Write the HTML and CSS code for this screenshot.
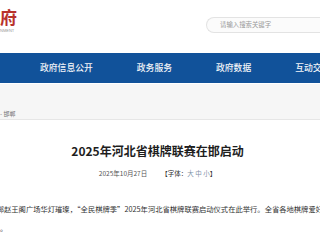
FILE: index.html
```html
<!DOCTYPE html>
<html lang="zh-CN">
<head>
<meta charset="utf-8">
<title>2025年河北省棋牌联赛在邯启动</title>
<link rel="stylesheet" href="styles.css">
</head>
<body>
<div class="page">
  <header class="top">
    <div class="logo">
      <span class="logo-cn">府</span>
      <span class="logo-en">NMENT</span>
    </div>
    <div class="search"><span class="search-ph">请输入搜索关键字</span></div>
  </header>
  <nav class="nav">
    <span class="nav-item">政府信息公开</span>
    <span class="nav-item">政务服务</span>
    <span class="nav-item">政府数据</span>
    <span class="nav-item">互动交流</span>
  </nav>
  <div class="crumb"><span class="crumb-text">- 邯郸</span></div>
  <main class="article">
    <h1 class="title">2025年河北省棋牌联赛在邯启动</h1>
    <div class="meta">
      <span class="date">2025年10月27日</span>
      <span class="fontsize">【字体：<span class="fs">大 中 小</span>】</span>
    </div>
    <p class="body">郸赵王阁广场华灯璀璨，“全民棋牌季”2025年河北省棋牌联赛启动仪式在此举行。全省各地棋牌爱好者齐聚一堂<br>。</p>
  </main>
</div>
</body>
</html>
```
FILE: styles.css
```css
html, body {
  margin: 0;
  padding: 0;
  background: #ffffff;
}
body {
  font-family: "Noto Sans CJK SC", "Noto Sans", sans-serif;
  color: #333;
}
.page {
  width: 320px;
  height: 240px;
  overflow: hidden;
}
.top {
  width: 330px;
  height: 53px;
  display: flex;
  align-items: flex-start;
}
.logo {
  display: flex;
  flex-direction: column;
  padding-top: 7px;
}
.logo-cn {
  font-size: 17px;
  line-height: 20px;
  font-weight: 700;
  color: #b8322c;
}
.logo-en {
  font-family: "Liberation Sans", sans-serif;
  font-size: 4px;
  line-height: 5px;
  color: #999;
  margin-top: 1px;
}
.search {
  margin-left: auto;
  margin-top: 17px;
  width: 110px;
  height: 14px;
  border: 1px solid #e3e3e3;
  border-right: none;
  border-radius: 8px 0 0 8px;
  background: #fbfbfb;
  display: flex;
  align-items: center;
  padding-left: 13px;
}
.search-ph {
  font-size: 6.4px;
  line-height: 8px;
  color: #9a9a9a;
  white-space: nowrap;
}
.nav {
  height: 30px;
  background: #11529a;
  display: flex;
  align-items: center;
  padding-left: 40px;
  gap: 44px;
  white-space: nowrap;
}
.nav-item {
  font-size: 8.8px;
  font-weight: 500;
  color: #f2f4f8;
  line-height: 12px;
}
.crumb {
  margin-top: 1px;
  height: 36px;
  background: #f6f6f6;
  border-bottom: 1px solid #e6e6e6;
  box-sizing: border-box;
  padding-top: 26px;
}
.crumb-text {
  display: block;
  font-size: 6px;
  line-height: 8px;
  color: #777;
}
.article {
  padding-right: 5px;
}
.title {
  margin: 23px 0 0;
  text-align: center;
  font-size: 12px;
  line-height: 16px;
  font-weight: 700;
  color: #1e1e1e;
  white-space: nowrap;
}
.meta {
  margin-top: 10px;
  display: flex;
  justify-content: center;
  gap: 14px;
  font-size: 6.5px;
  line-height: 8px;
  white-space: nowrap;
}
.date {
  color: #555;
}
.fontsize {
  color: #333;
}
.fs {
  color: #7f93a8;
}
.body {
  margin: 23px 0 0;
  font-size: 7.3px;
  line-height: 19px;
  color: #333;
  white-space: nowrap;
  text-indent: -3.3px;
}
```
